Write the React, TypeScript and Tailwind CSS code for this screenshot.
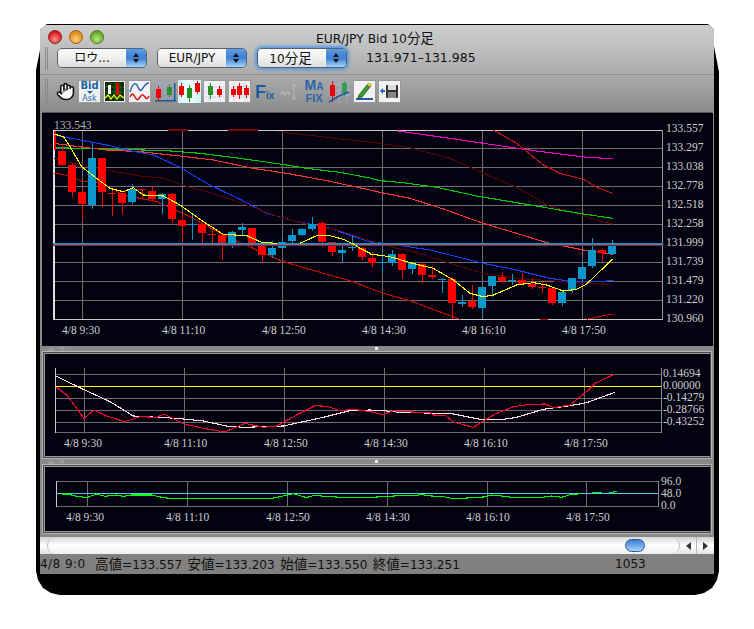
import { Hand } from "lucide-react"

type Pt = [number, number]
const z2 = (p: Pt[]) => p.map(([x, y]) => `${40 + x / 3},${110 + y / 3}`)
const z3 = (p: Pt[]) => p.map(([x, y]) => `${370 + x / 3},${110 + y / 3}`)
const line = (a: Pt[], b: Pt[] = []) => [...z2(a), ...z3(b)].join(" ")

const CHART_BG = "#020210"
const BLUE = "#0a97cc"
const RED = "#ff0000"

// [x in zoom px, body top, body bottom, wick top, wick bottom, up?]
const candlesLeft: [number, number, number, number, number, number][] = [
  [66, 123, 165, 108, 168, 0], [96, 165, 245, 160, 262, 0], [126, 246, 282, 235, 332, 0],
  [156, 144, 285, 100, 296, 1], [186, 144, 245, 144, 290, 0], [216, 248, 251, 235, 318, 0],
  [246, 250, 278, 250, 312, 0], [276, 237, 276, 222, 282, 1], [306, 238, 241, 238, 264, 0],
  [336, 243, 268, 230, 272, 0], [366, 252, 267, 250, 312, 1], [396, 252, 327, 250, 338, 0],
  [426, 330, 347, 315, 400, 0], [456, 342, 345, 310, 390, 1], [486, 342, 369, 342, 400, 0],
  [516, 372, 375, 355, 402, 0], [546, 376, 402, 376, 450, 0], [576, 366, 408, 364, 415, 1],
  [606, 351, 360, 340, 375, 1], [636, 354, 402, 354, 416, 0], [666, 405, 435, 402, 458, 0],
  [696, 414, 435, 394, 443, 1], [726, 396, 414, 380, 414, 1], [756, 375, 393, 357, 402, 1],
  [786, 357, 375, 354, 378, 1], [816, 342, 357, 321, 363, 1], [846, 339, 396, 333, 410, 0],
  [876, 396, 426, 396, 438, 0], [906, 420, 429, 408, 456, 1], [936, 412, 415, 378, 422, 1],
  [966, 414, 441, 410, 450, 0], [996, 444, 459, 426, 470, 0],
]
const candlesRight: [number, number, number, number, number, number][] = [
  [36, 456, 459, 430, 485, 1], [66, 432, 458, 420, 468, 1], [96, 432, 480, 430, 507, 0],
  [126, 458, 477, 455, 492, 1], [156, 462, 495, 456, 519, 0], [186, 495, 501, 468, 507, 0],
  [216, 507, 510, 505, 549, 1], [246, 507, 579, 501, 628, 0], [276, 577, 581, 555, 591, 1],
  [306, 573, 592, 525, 598, 0], [336, 531, 594, 531, 612, 1], [366, 498, 528, 498, 561, 1],
  [396, 501, 514, 489, 519, 0], [426, 511, 514, 492, 525, 1], [456, 510, 521, 489, 525, 0],
  [486, 522, 531, 504, 537, 0], [516, 531, 534, 516, 549, 0], [546, 534, 579, 534, 585, 0],
  [576, 546, 579, 540, 588, 1], [606, 504, 540, 504, 549, 1], [636, 471, 507, 456, 510, 1],
  [666, 420, 468, 384, 474, 1], [696, 420, 430, 417, 456, 0], [726, 408, 432, 390, 435, 1],
]

const dates = ["4/8 9:30", "4/8 11:10", "4/8 12:50", "4/8 14:30", "4/8 16:10", "4/8 17:50"]
const mainLabels = ["133.557", "133.297", "133.038", "132.778", "132.518", "132.258", "131.999", "131.739", "131.479", "131.220", "130.960"]
const mainGrid = [148.3, 167.3, 186.3, 205.3, 224.3, 262.3, 281.3, 300.3]

function Poly({ points, color, width = 1.1 }: { points: string; color: string; width?: number }) {
  return <polyline points={points} fill="none" stroke={color} strokeWidth={width} />
}

function Candle({ c, off }: { c: [number, number, number, number, number, number]; off: number }) {
  const [x, bt, bb, wt, wb, up] = c
  const cx = Math.round(off + x / 3)
  const fill = up ? BLUE : RED
  return (
    <g>
      <rect x={cx} y={110 + wt / 3} width={1} height={(wb - wt) / 3} fill={fill} />
      <rect x={cx - 4} y={110 + bt / 3} width={8} height={(bb - bt) / 3} fill={fill} />
    </g>
  )
}

function MainChart() {
  return (
    <svg width={671} height={233} viewBox="42 113 671 233" className="block font-['Liberation_Serif',serif]" style={{ background: CHART_BG }}>
      <text x={54} y={129} fontSize={11.5} fill="#b5b5b5">133.543</text>
      <rect x={53} y={130} width={609} height={190} fill={CHART_BG} />
      <g shapeRendering="crispEdges">
        {mainGrid.map((y) => <rect key={y} x={53} y={y} width={609} height={1} fill="#6e6e6e" />)}
        {[82, 182, 282, 382, 482, 582].map((x) => <rect key={x} x={x} y={130} width={1} height={190} fill="#6e6e6e" />)}
        <rect x={53} y={130} width={610} height={1} fill="#c8c8c8" />
        <rect x={53} y={319} width={610} height={1} fill="#c8c8c8" />
        <rect x={53} y={130} width={2} height={190} fill="#e0e0e0" />
        <rect x={662} y={130} width={1} height={190} fill="#9a9a9a" />

        <Poly color="#ff00cc" points={z3([[85, 63], [240, 85], [340, 100], [500, 123], [650, 142], [728, 146]]).join(" ")} />
        <Poly color="#5a0000" points={line([[715, 65], [800, 75], [1020, 100]], [[120, 113], [240, 145], [340, 190], [440, 232], [540, 290], [640, 315], [680, 332], [728, 342]])} />
        <Poly color="#c01818" points={z3([[370, 60], [440, 100], [520, 165], [570, 190], [640, 208], [680, 232], [728, 250]]).join(" ")} />
        <Poly color="#00c800" points={line([[42, 113], [200, 117], [380, 122], [480, 130], [600, 145], [720, 162], [800, 175], [900, 187], [990, 204]], [[30, 212], [100, 218], [200, 232], [320, 258], [440, 278], [540, 295], [640, 312], [728, 325]])} />
        <Poly color="#ff3333" points={line([[42, 100], [100, 108], [200, 120], [300, 125], [420, 138], [520, 150], [640, 175], [740, 190], [860, 212], [990, 240]], [[30, 247], [120, 265], [220, 297], [340, 340], [440, 370], [530, 398], [640, 420], [728, 433]])} />
        <Poly color="#1a3cff" points={line([[42, 75], [120, 90], [200, 105], [270, 122], [340, 135], [420, 172], [500, 220], [600, 268], [680, 310], [760, 332], [870, 355], [990, 396]], [[40, 400], [100, 408], [180, 420], [240, 435], [340, 460], [440, 480], [540, 505], [600, 514], [660, 516], [728, 512]])} />
        <Poly color="#5a0000" points={line([[42, 145], [100, 160], [200, 180], [300, 198], [370, 205], [450, 232], [520, 250], [620, 285], [720, 322], [800, 342], [900, 362], [990, 392]], [[60, 410], [130, 425], [240, 460], [340, 490], [440, 505], [540, 512], [640, 520], [728, 523]])} />
        <Poly color="#c80000" points={line([[42, 190], [70, 193], [130, 215], [180, 218], [250, 255], [350, 275], [450, 320], [550, 375], [650, 420], [730, 455], [850, 490], [930, 512], [990, 535]], [[40, 550], [120, 572], [200, 602], [270, 628]])} />
        <Poly color="#c80000" points={z3([[510, 628], [535, 628]]).join(" ")} />
        <Poly color="#c80000" points={z3([[650, 628], [720, 613], [728, 613]]).join(" ")} />
        <Poly color="#7a0000" points={z2([[385, 60], [445, 60]]).join(" ")} />
        <Poly color="#7a0000" points={z2([[565, 60], [655, 60]]).join(" ")} />

        <rect x={54} y={131} width={2} height={19} fill={RED} />
        {candlesLeft.map((c) => <Candle key={c[0]} c={c} off={40} />)}
        {candlesRight.map((c) => <Candle key={c[0]} c={c} off={370} />)}

        <rect x={53} y={243} width={610} height={2} fill={BLUE} />
        <rect x={53} y={245} width={610} height={1} fill="#d00000" />

        <Poly color="#ffff00" points={line([[42, 72], [70, 80], [90, 110], [125, 170], [170, 205], [210, 235], [250, 245], [280, 233], [310, 255], [370, 258], [420, 285], [490, 335], [550, 373], [620, 377], [665, 397], [710, 400]])} />
        <Poly color="#ffff00" points={line([[780, 400], [830, 377], [870, 377], [910, 388], [940, 402], [960, 415], [990, 430]], [[0, 432], [60, 440], [120, 458], [190, 475], [250, 510], [300, 550], [340, 560], [370, 555], [440, 525], [490, 518], [530, 525], [580, 543], [620, 538], [650, 522], [728, 447]])} />
      </g>
      {mainLabels.map((t, i) => (
        <text key={t} x={666} y={132 + i * 19} fontSize={11.5} fill="#cfcfcf">{t}</text>
      ))}
      {dates.map((t, i) => (
        <text key={t} x={62 + i * 100} y={334} fontSize={11.5} fill="#cfcfcf">{t}</text>
      ))}
    </svg>
  )
}

const p4 = (p: Pt[]) => p.map(([x, y]) => `${30 + x / 3},${340 + y / 3}`)
const p5 = (p: Pt[]) => p.map(([x, y]) => `${370 + x / 3},${340 + y / 3}`)

function MacdChart() {
  return (
    <svg width={665} height={102} viewBox="45 354 665 102" className="block font-['Liberation_Serif',serif]" style={{ background: CHART_BG }}>
      <g shapeRendering="crispEdges">
        {[374, 398, 410, 422, 432].map((y) => <rect key={y} x={55} y={y} width={606} height={1} fill="#6e6e6e" />)}
        {[84, 184, 284, 384, 484, 584].map((x) => <rect key={x} x={x} y={368} width={1} height={64} fill="#6e6e6e" />)}
        <rect x={55} y={368} width={1} height={65} fill="#c8c8c8" />
        <rect x={661} y={368} width={1} height={65} fill="#8a8a8a" />
        <rect x={55} y={386} width={606} height={1} fill="#ffff00" />
        <Poly color="#ffdcdc" points={[...p4([[77, 108], [160, 148], [240, 185], [310, 228], [440, 235], [520, 243], [590, 258], [640, 262], [760, 258], [880, 232], [960, 212], [1020, 210]]), ...p5([[40, 212], [100, 218], [240, 220], [340, 240], [400, 238], [440, 232], [520, 208], [600, 197], [650, 188], [735, 157]])].join(" ")} />
        <Poly color="#ff0033" points={[...p4([[77, 140], [110, 165], [162, 235], [192, 210], [230, 228], [285, 245], [330, 230], [380, 232], [402, 222], [462, 252], [520, 265], [585, 276], [645, 250], [700, 262], [740, 258], [800, 225], [855, 197], [890, 199], [930, 212], [970, 208], [1020, 215]]), ...p5([[40, 224], [70, 212], [100, 215], [180, 218], [190, 225], [225, 226], [250, 246], [310, 262], [345, 240], [375, 222], [430, 200], [480, 193], [525, 192], [550, 203], [600, 195], [650, 155], [675, 130], [735, 102]])].join(" ")} />
      </g>
      {["0.14694", "0.00000", "-0.14279", "-0.28766", "-0.43252"].map((t, i) => (
        <text key={t} x={663} y={377 + i * 12} fontSize={11.5} fill="#cfcfcf">{t}</text>
      ))}
      {dates.map((t, i) => (
        <text key={t} x={64 + i * 100} y={447} fontSize={11.5} fill="#cfcfcf">{t}</text>
      ))}
    </svg>
  )
}

const p6 = (p: Pt[]) => p.map(([x, y]) => `${30 + x / 3},${460 + y / 3}`)
const p7 = (p: Pt[]) => p.map(([x, y]) => `${400 + x / 3},${460 + y / 3}`)

function RsiChart() {
  return (
    <svg width={665} height={64} viewBox="45 467 665 64" className="block font-['Liberation_Serif',serif]" style={{ background: CHART_BG }}>
      <g shapeRendering="crispEdges">
        <rect x={57} y={481} width={602} height={1} fill="#6e6e6e" />
        <rect x={57} y={506} width={602} height={1} fill="#6e6e6e" />
        {[87, 187, 287, 387, 487, 586].map((x) => <rect key={x} x={x} y={481} width={1} height={25} fill="#6e6e6e" />)}
        <rect x={56} y={481} width={1} height={26} fill="#c8c8c8" />
        <rect x={658} y={481} width={1} height={26} fill="#8a8a8a" />
        <rect x={57} y={493} width={601} height={1} fill="#55c8f0" />
        <Poly color="#00ff00" points={[...p6([[95, 102], [115, 102], [130, 107], [170, 113], [200, 102], [225, 109], [260, 105], [280, 109], [305, 105], [365, 105], [395, 112], [425, 116], [725, 115], [750, 110], [790, 101], [830, 113], [855, 105], [880, 109], [935, 112], [1025, 112]]), ...p7([[0, 107], [35, 107], [65, 104], [95, 108], [130, 110], [155, 115], [185, 115], [250, 111], [275, 105], [305, 108], [335, 112], [425, 112], [455, 108], [485, 112], [510, 104], [545, 101]])].join(" ")} />
        <Poly color="#00ff00" points={p7([[575, 97], [605, 97]]).join(" ")} />
        <Poly color="#00ff00" points={p7([[627, 98], [640, 96], [650, 94]]).join(" ")} />
      </g>
      {["96.0", "48.0", "0.0"].map((t, i) => (
        <text key={t} x={661} y={485 + i * 12} fontSize={11.5} fill="#cfcfcf">{t}</text>
      ))}
      {dates.map((t, i) => (
        <text key={t} x={66 + i * 100} y={521} fontSize={11.5} fill="#cfcfcf">{t}</text>
      ))}
    </svg>
  )
}

function SelectBox({ label, focus }: { label: React.ReactNode; focus?: boolean }) {
  return (
    <div className={`flex h-[20px] w-[90px] overflow-hidden rounded-[5px] border border-[#55606c] ${focus ? "shadow-[0_0_3px_2px_#5a9ae0]" : ""}`}>
      <div className="flex flex-1 items-center justify-center bg-gradient-to-b from-[#fafafa] via-[#f0f0f0] to-[#dcdcdc] text-[12px] text-[#111]">{label}</div>
      <div className="flex w-[20px] flex-col items-center justify-center gap-[2px] bg-gradient-to-b from-[#5b9fe6] via-[#3a7fd2] to-[#a5d6f8]">
        <div className="h-0 w-0 border-x-[3px] border-b-[4px] border-x-transparent border-b-[#111]" />
        <div className="h-0 w-0 border-x-[3px] border-t-[4px] border-x-transparent border-t-[#111]" />
      </div>
    </div>
  )
}

function IconBtn({ children, className = "" }: { children: React.ReactNode; className?: string }) {
  return (
    <div className={`flex h-[23px] w-[23px] shrink-0 items-center justify-center overflow-hidden ${className}`}>
      {children}
    </div>
  )
}

const btn = "bg-[#f1f1f1] shadow-[inset_0_0_0_1px_#9a9a9a]"

function MiniCandle({ x, y, h, c, wt, wb }: { x: number; y: number; h: number; c: string; wt: number; wb: number }) {
  return (
    <g>
      <rect x={x + 2} y={wt} width={1} height={wb - wt} fill={c} />
      <rect x={x} y={y} width={5} height={h} fill={c} />
    </g>
  )
}

function Gripper({ className = "" }: { className?: string }) {
  return <div className={`w-[3px] shrink-0 border-x border-[#8a8a8a] ${className}`} />
}

function Toolbar() {
  return (
    <div className="flex h-[23px] items-center pl-[5px]">
      <Gripper className="h-[27px]" />
      <div className="ml-[8px] flex w-[22px] shrink-0 items-center">
        <Hand size={19} fill="#fff" stroke="#111" strokeWidth={2} />
      </div>
      <div className="flex gap-[2px]">
        <IconBtn className={`${btn} flex-col`}>
          <span className="text-[10px] leading-[9px] font-bold text-[#1564a8]">Bid</span>
          <span className="my-px h-0 w-0 border-x-[3px] border-t-[3px] border-x-transparent border-t-[#1564a8]" />
          <span className="text-[8px] leading-[8px] text-[#1564a8]">Ask</span>
        </IconBtn>
        <IconBtn className={btn}>
          <svg width={19} height={19}>
            <rect width={19} height={19} fill="#0d2a0d" />
            <path d="M0 5h19M0 10h19M0 15h19M5 0v19M10 0v19M15 0v19" stroke="#1f7a1f" strokeWidth={0.7} />
            <rect x={3} y={3} width={3} height={9} fill="#fff" />
            <rect x={11} y={1} width={3} height={12} fill="#e00" />
            <path d="M0 16l3-3 3 4 3-4 3 4 3-4 4 3" stroke="#ff0" strokeWidth={1.2} fill="none" />
          </svg>
        </IconBtn>
        <IconBtn className={btn}>
          <svg width={21} height={21} fill="none">
            <path d="M1 11C4 1 7 1 9 6s3 4 5 1 3-5 6-5" stroke="#2a5fb0" strokeWidth={1.4} />
            <path d="M1 16c2-4 3-4 5 0s3 3 5 0 3-3 5 0 3 1 4-1" stroke="#e01010" strokeWidth={1.5} />
          </svg>
        </IconBtn>
        <IconBtn className="ml-[1px]">
          <svg width={23} height={23}>
            <path d="M1 3h21M1 8h21M1 13h21M1 18h21M5 1v20M11 1v20M17 1v20" stroke="#9aa8d8" strokeWidth={0.8} />
            <rect x={20} y={3} width={1.5} height={18} fill="#1a5c9a" />
            <rect x={1} y={20} width={21} height={1.5} fill="#1a5c9a" />
            <MiniCandle x={2} y={9} h={9} c="#e00" wt={6} wb={21} />
            <MiniCandle x={13} y={7} h={8} c="#2f8f2f" wt={4} wb={17} />
          </svg>
        </IconBtn>
        <IconBtn className="-ml-[1px] bg-gradient-to-r from-[#c8f4f8] via-[#f4ffff] to-[#c8f4f8]">
          <svg width={23} height={23}>
            <MiniCandle x={1} y={6} h={9} c="#e00" wt={3} wb={17} />
            <MiniCandle x={9} y={8} h={10} c="#1f8f1f" wt={5} wb={22} />
            <MiniCandle x={17} y={3} h={9} c="#e00" wt={1} wb={14} />
          </svg>
        </IconBtn>
        <IconBtn className={btn}>
          <svg width={21} height={21}>
            <path d="M1 6h19M1 11h19M1 16h19M5 1v19M16 1v19" stroke="#c8d0ec" strokeWidth={0.8} />
            <MiniCandle x={4} y={5} h={9} c="#2f8f2f" wt={2} wb={18} />
            <MiniCandle x={13} y={8} h={6} c="#e00" wt={5} wb={16} />
          </svg>
        </IconBtn>
        <IconBtn className={btn}>
          <svg width={21} height={21}>
            <path d="M1 6h19M1 11h19M1 16h19M5 1v19M16 1v19" stroke="#c8d0ec" strokeWidth={0.8} />
            <MiniCandle x={2} y={8} h={6} c="#e00" wt={5} wb={16} />
            <MiniCandle x={8} y={5} h={9} c="#e00" wt={2} wb={18} />
            <MiniCandle x={15} y={7} h={7} c="#e00" wt={4} wb={17} />
          </svg>
        </IconBtn>
      </div>
      <div className="ml-[4px] flex w-[17px] items-end font-['Liberation_Sans',sans-serif] font-bold text-[#1a5a9e]">
        <span className="text-[18px] leading-[18px]">F</span>
        <span className="text-[10px] leading-[11px]">ix</span>
      </div>
      <div className="ml-[8px] flex w-[18px] justify-center">
        <svg width={18} height={20} fill="none" stroke="#b9b9b9">
          <path d="M0 12l3-2 2 3 3-3 2 3" strokeWidth={1.4} />
          <path d="M14 2v16M12 5l2-3 2 3M12 15l2 3 2-3" />
        </svg>
      </div>
      <div className="ml-[6px] flex w-[20px] flex-col items-center font-['Liberation_Sans',sans-serif] leading-none font-bold text-[#2a66ac]">
        <span className="text-[14px] leading-[12px]">M<span className="text-[10px]">A</span></span>
        <span className="text-[11px] leading-[11px]">FIX</span>
      </div>
      <IconBtn className="ml-[3px]">
        <svg width={23} height={23}>
          <path d="M0 5h23M0 10h23M0 15h23M4 0v23M12 0v23M20 0v23" stroke="#a8b0dc" strokeWidth={0.8} />
          <MiniCandle x={3} y={5} h={11} c="#e00" wt={1} wb={22} />
          <MiniCandle x={15} y={3} h={10} c="#2f9f4f" wt={1} wb={16} />
          <path d="M2 22l10-6 10-4" stroke="#1a5c9a" strokeWidth={1.6} fill="none" />
        </svg>
      </IconBtn>
      <IconBtn className={`${btn} ml-[3px]`}>
        <svg width={21} height={21}>
          <path d="M5 14L13 4l3 2-8 10-4 1z" fill="#3f9f2f" stroke="#1d4d14" strokeWidth={0.8} />
          <path d="M13 4l1.5-2 3 2-1.5 2z" fill="#f0e030" stroke="#6d6d10" strokeWidth={0.6} />
          <rect x={2} y={17} width={17} height={2} fill="#1c5ca0" />
        </svg>
      </IconBtn>
      <IconBtn className={`${btn} ml-[2px]`}>
        <svg width={21} height={21}>
          <path d="M1 10l3-3v6z" fill="#1c66c0" />
          <rect x={4} y={9} width={2} height={2} fill="#1c66c0" />
          <rect x={7} y={4} width={12} height={13} rx={1} fill="#333" />
          <rect x={9} y={4} width={8} height={5} fill="#ddd" />
          <rect x={9} y={11} width={8} height={6} fill="#888" />
        </svg>
      </IconBtn>
    </div>
  )
}

function Divider() {
  return (
    <div className="flex h-[5px] items-center justify-between bg-[#8a8a8a] pl-[5px] pr-[334px]">
      <div className="flex gap-[3px]">
        <div className="h-0 w-0 border-x-[4px] border-b-[4px] border-x-transparent border-b-[#9c9c9c]" />
        <div className="h-0 w-0 border-x-[4px] border-t-[4px] border-x-transparent border-t-[#9c9c9c]" />
      </div>
      <div className="h-[3px] w-[3px] bg-[#f0f0f0]" />
    </div>
  )
}

function Pane({ children }: { children: React.ReactNode }) {
  return (
    <div className="border border-[#b4b4b4] bg-[#4a4a4a] p-px">
      <div className="border border-[#9a9a9a] bg-[#020210]">{children}</div>
    </div>
  )
}

function Cjk({ children }: { children: React.ReactNode }) {
  return <span className="text-[13.5px]">{children}</span>
}

function Quote({ name, value }: { name: string; value: string }) {
  return (
    <span className="mr-[4.6px] w-[88px] shrink-0">
      <Cjk>{name}</Cjk>={value}
    </span>
  )
}

export default function App() {
  return (
    <div className="h-[629px] w-[754px] overflow-hidden bg-white pl-[36px] pt-[24px] font-['DejaVu_Sans','Noto_Sans_CJK_JP',sans-serif]">
      <div className="h-[571px] w-[683px] bg-black pl-[4px] pt-px [clip-path:polygon(11px_0,672px_0,678px_6px,678px_22px,683px_48px,683px_547px,681px_556px,676px_564px,668px_569px,659px_571px,24px_571px,15px_569px,7px_564px,2px_556px,0_547px,0_46px,4px_26px,4px_6px)]">
        <div className="relative w-[674px] overflow-hidden rounded-t-[6px]">
          <div className="h-[87px] bg-gradient-to-b from-[#cfcfcf] via-[#b0b0b0] to-[#8b8b8b]">
            {/* Title bar */}
            <div className="relative flex h-[23px] items-center gap-[7px] pl-[8px]">
              <div className="h-[14px] w-[14px] rounded-full border border-[#8f1d1d] bg-[radial-gradient(circle_at_50%_70%,#ff8f8f,#d81818_70%)]" />
              <div className="h-[14px] w-[14px] rounded-full border border-[#a06010] bg-[radial-gradient(circle_at_50%_70%,#ffd27f,#e08a18_70%)]" />
              <div className="h-[14px] w-[14px] rounded-full border border-[#4b7a18] bg-[radial-gradient(circle_at_50%_70%,#b8e880,#62a828_70%)]" />
              <span className="absolute left-[276px] top-[3px] text-[12.3px] whitespace-nowrap text-[#111]">EUR/JPY Bid 10<Cjk>分足</Cjk></span>
            </div>
            {/* Selectors */}
            <div className="flex h-[20px] items-center pl-[5px]">
              <Gripper className="h-[23px]" />
              <div className="ml-[9px] flex items-center gap-[10px]">
                <SelectBox label="ロウ..." />
                <SelectBox label="EUR/JPY" />
                <SelectBox label={<span className="-ml-[3px]">10<Cjk>分足</Cjk></span>} focus />
              </div>
              <span className="ml-[19px] text-[12.5px] whitespace-nowrap text-[#111]">131.971–131.985</span>
            </div>
            <div className="mt-[6px] h-px bg-[#8e8e8e]" />
            <div className="pt-[5px]">
              <Toolbar />
            </div>
          </div>
          <div className="bg-[#8a8a8a] px-[2px]">
            <div className="border-t border-[#555]">
              <MainChart />
            </div>
            <Divider />
            <Pane><MacdChart /></Pane>
            <Divider />
            <Pane><RsiChart /></Pane>
          </div>
          {/* Scroll bar */}
          <div className="h-[3px] bg-[#8a8a8a]" />
          <div className="flex h-[17px] bg-gradient-to-b from-[#cfcfcf] via-white to-[#e4e4e4]">
            <div className="relative flex-1">
              <div className="ml-[7px] h-full w-[633px] rounded-full border-x border-[#c0c0c0] bg-gradient-to-b from-[#d8d8d8] via-white to-[#f0f0f0]" />
              <div className="absolute left-[585px] top-[2px] h-[13px] w-[20px] rounded-full border border-[#2b5c9c] bg-gradient-to-b from-[#3a7ed0] via-[#6fa8e8] to-[#a8d4f8]" />
            </div>
            <div className="flex w-[34px] items-center">
              <div className="flex h-full w-[17px] items-center justify-center border-r border-[#bbb]">
                <div className="h-0 w-0 border-y-[4px] border-r-[5px] border-y-transparent border-r-[#333]" />
              </div>
              <div className="flex h-full w-[17px] items-center justify-center">
                <div className="h-0 w-0 border-y-[4px] border-l-[5px] border-y-transparent border-l-[#333]" />
              </div>
            </div>
          </div>
          {/* Status bar */}
          <div className="relative flex h-[20px] items-center bg-[#808080] text-[12.1px] whitespace-nowrap text-[#111]">
            <span className="mr-[8px] w-[47px] shrink-0 tracking-[0.4px]">4/8 9:0</span>
            <Quote name="高値" value="133.557" />
            <Quote name="安値" value="133.203" />
            <Quote name="始値" value="133.550" />
            <Quote name="終値" value="133.251" />
            <span className="absolute left-[575px]">1053</span>
          </div>
        </div>
      </div>
    </div>
  )
}
